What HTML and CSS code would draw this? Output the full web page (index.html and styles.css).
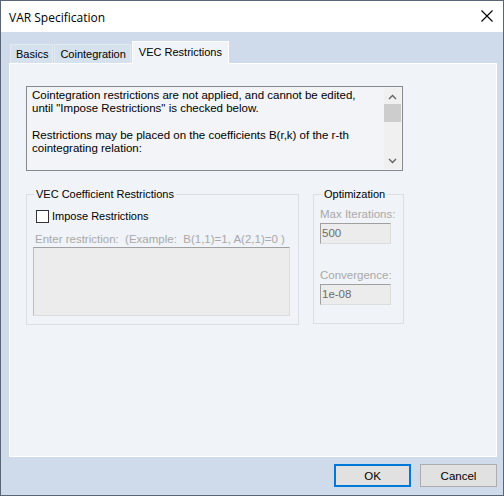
FILE: index.html
```html
<!DOCTYPE html>
<html>
<head>
<meta charset="utf-8">
<link rel="stylesheet" href="styles.css">
</head>
<body>
<div class="window">
  <div class="titlebar">
    <span class="title">VAR Specification</span>
    <svg class="close" width="12" height="12" viewBox="0 0 12 12"><path d="M0.5 0.5 L11.5 11.5 M11.5 0.5 L0.5 11.5" stroke="#000" stroke-width="1.1" fill="none"/></svg>
  </div>
  <div class="body">
    <div class="tabs">
      <div class="tab">Basics</div>
      <div class="tab">Cointegration</div>
      <div class="tab active">VEC Restrictions</div>
    </div>
    <div class="panel">
      <div class="info">
        <div class="info-text">
          <p>Cointegration restrictions are not applied, and cannot be edited,<br>until "Impose Restrictions" is checked below.</p>
          <p>Restrictions may be placed on the coefficients B(r,k) of the r-th<br>cointegrating relation:</p>
        </div>
        <div class="scrollbar">
          <svg class="arrow" width="9" height="6" viewBox="0 0 9 6"><path d="M1 5 L4.5 1.5 L8 5" stroke="#606060" stroke-width="1.3" fill="none"/></svg>
          <div class="thumb"></div>
          <div class="track"></div>
          <svg class="arrow" width="9" height="6" viewBox="0 0 9 6"><path d="M1 1 L4.5 4.5 L8 1" stroke="#606060" stroke-width="1.3" fill="none"/></svg>
        </div>
      </div>
      <div class="groups">
        <div class="group vec">
          <span class="legend">VEC Coefficient Restrictions</span>
          <label class="check"><span class="box"></span>Impose Restrictions</label>
          <div class="hint">Enter restriction:&nbsp; (Example:&nbsp; B(1,1)=1, A(2,1)=0 )</div>
          <div class="textarea"></div>
        </div>
        <div class="group opt">
          <span class="legend">Optimization</span>
          <div class="field-label">Max Iterations:</div>
          <div class="input">500</div>
          <div class="field-label second">Convergence:</div>
          <div class="input">1e-08</div>
        </div>
      </div>
    </div>
    <div class="buttons">
      <div class="btn default">OK</div>
      <div class="btn">Cancel</div>
    </div>
  </div>
</div>
</body>
</html>
```

FILE: styles.css
```css
* { box-sizing: border-box; }
html, body { margin: 0; padding: 0; }
body {
  width: 504px;
  height: 496px;
  overflow: hidden;
  font-family: "Liberation Sans", Arial, sans-serif;
  font-size: 11.5px;
  color: #000;
}
.window {
  width: 504px;
  height: 496px;
  border: 1px solid #5a6676;
  display: flex;
  flex-direction: column;
  background: #cfdbea;
}
.titlebar {
  height: 31px;
  background: #fff;
  display: flex;
  align-items: center;
  justify-content: space-between;
  padding: 0 10px 0 8px;
  flex: none;
}
.title {
  font-family: "Open Sans", "Liberation Sans", sans-serif;
  font-size: 12px;
  color: #000;
  margin-top: 1px;
}
.close { margin-top: -1px; }
.body {
  flex: 1;
  display: flex;
  flex-direction: column;
  padding: 9px 6px 0 8px;
}
.tabs {
  display: flex;
  align-items: flex-end;
  height: 22px;
  padding-left: 1px;
  position: relative;
  z-index: 1;
}
.tab {
  height: 19px;
  padding: 0 4px 0 5px;
  line-height: 18px;
  font-size: 11px;
  background: #d6e1ee;
  border: 1px solid #e3eaf2;
  border-bottom: none;
  margin-right: 1px;
}
.tab.active {
  height: 23px;
  margin-bottom: -1px;
  line-height: 20px;
  background: #f0f3f8;
  border-color: #fff;
  padding: 0 6px;
}
.panel {
  height: 394px;
  background: #f0f3f8;
  border: 1px solid #fff;
  padding: 22px 0 0 16px;
}
.info {
  width: 377px;
  height: 85px;
  border: 1px solid #858a91;
  background: #f2f4f8;
  display: flex;
}
.info-text {
  flex: 1;
  padding: 2px 0 0 5px;
  line-height: 13px;
}
.info-text p { margin: 0 0 14px 0; }
.scrollbar {
  width: 17px;
  margin: 1px 1px 1px 0;
  background: #f0f0f0;
  display: flex;
  flex-direction: column;
  align-items: center;
}
.arrow { margin: 6px 0 4px; flex: none; }
.scrollbar .arrow:last-child { margin: 4px 0 5px; }
.thumb {
  width: 17px;
  height: 18px;
  background: #cdcdcd;
  flex: none;
}
.track { flex: 1; }
.groups {
  display: flex;
  gap: 14px;
  margin-top: 23px;
}
.group {
  border: 1px solid #dadfe6;
  display: flex;
  flex-direction: column;
  align-items: flex-start;
}
.legend {
  background: #f0f3f8;
  margin-top: -8px;
  padding: 0 2px;
  line-height: 14px;
  font-size: 11px;
}
.vec {
  width: 273px;
  height: 131px;
  padding: 0 0 0 6px;
}
.vec .legend { margin-left: 1px; }
.check {
  display: flex;
  align-items: center;
  margin: 8px 0 0 3px;
  font-size: 11px;
  line-height: 14px;
}
.box {
  width: 13px;
  height: 13px;
  border: 1px solid #333;
  background: #fff;
  margin-right: 3px;
}
.hint {
  color: #a9a9a9;
  margin: 10px 0 0 2px;
  line-height: 13px;
}
.textarea {
  width: 257px;
  height: 69px;
  margin-top: 1px;
  background: #ececec;
  border: 1px solid #dcdcdc;
  border-top-color: #a0a0a0;
  border-left-color: #c0c0c0;
}
.opt {
  width: 91px;
  height: 130px;
  padding: 0 0 0 6px;
}
.opt .legend { margin-left: 2px; }
.field-label {
  color: #a9a9a9;
  margin-top: 7px;
  line-height: 13px;
  white-space: nowrap;
}
.field-label.second { margin-top: 25px; }
.input {
  width: 71px;
  height: 21px;
  margin-top: 2px;
  background: #ececec;
  border: 1px solid #dcdcdc;
  border-top-color: #a0a0a0;
  border-left-color: #a0a0a0;
  color: #6d6d6d;
  padding: 3px 0 0 1px;
  line-height: 13px;
}
.buttons {
  display: flex;
  justify-content: flex-end;
  gap: 9px;
  margin-top: 7px;
}
.btn {
  width: 77px;
  height: 23px;
  border: 1px solid #adadad;
  background: #e1e1e1;
  display: flex;
  align-items: center;
  justify-content: center;
  font-size: 11.5px;
}
.btn.default {
  border: 2px solid #0078d7;
}
```
